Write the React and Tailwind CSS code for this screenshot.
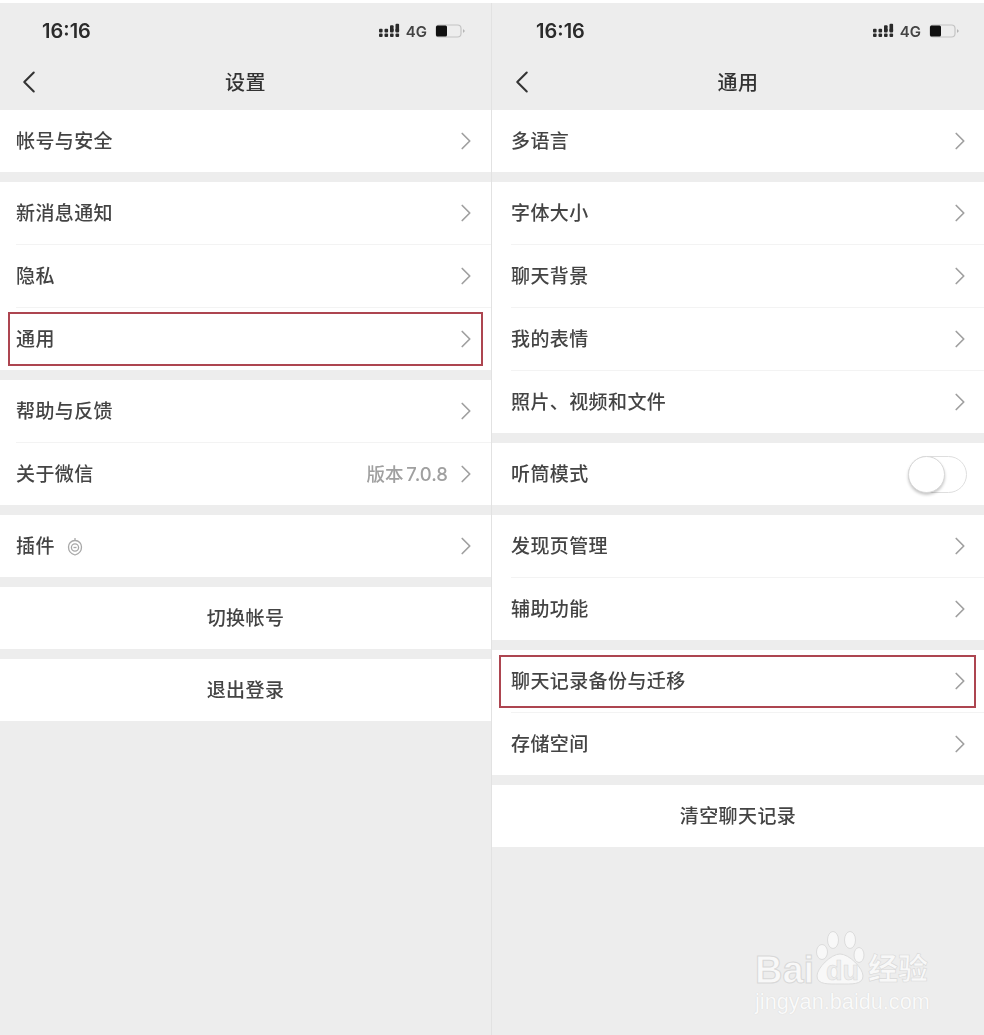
import { ChevronRight, ChevronLeft } from 'lucide-react';

function StatusIcons() {
  return (
    <div className="flex items-center gap-[5px] blur-[0.4px]">
      <svg width="22" height="16" viewBox="0 0 22 16" className="text-[#2a2a2a]">
        {[0, 1, 2, 3].map(col => (
          <g key={col} fill="currentColor">
            <rect x={col * 5.5} y="10.5" width="3.6" height="3.6" rx="1" />
            <rect x={col * 5.5} y="5.8" width="3.6" height="3.6" rx="1" />
            {col > 1 && <rect x={col * 5.5} y={col > 2 ? 0.8 : 2.2} width="3.6" height={col > 2 ? 8 : 6} rx="1" />}
          </g>
        ))}
      </svg>
      <span className="text-[15px] font-semibold text-[#444] leading-none">4G</span>
      <svg width="31" height="14" viewBox="0 0 31 14" className="ml-[3px]">
        <rect x="1" y="1" width="25" height="12" rx="3.5" fill="none" stroke="#c4c4c4" strokeWidth="1.2" />
        <rect x="1" y="1.5" width="11" height="11" rx="1.5" fill="#111" />
        <path d="M28 5 L30 7 L28 9 Z" fill="#b5b5b5" />
      </svg>
    </div>
  );
}

function Row({ label, value, icon, toggle, center, divider, boxed, wide }) {
  const pad = center ? 'justify-center' : wide ? 'justify-between pl-[19px] pr-[9px]' : 'justify-between pl-4 pr-[10px]';
  return (
    <div className="relative">
      {divider && <div className={`h-px bg-[#f3f3f3] ${wide ? 'ml-[19px]' : 'ml-4'}`} />}
      <div className={`h-[62px] flex items-center text-[19px] font-medium tracking-[0.4px] text-[#444] ${pad}`}>
        <div className="flex items-center gap-3 pt-[2px] blur-[0.6px]">
          <span>{label}</span>
          {icon && (
            <svg width="16" height="20" viewBox="0 0 16 20" fill="none" stroke="#a8a8a8" strokeWidth="1.3">
              <path d="M8 1 L8 4" />
              <path d="M8 3.5 C12 3.5 14.5 6.5 14.5 10 C14.5 14 11.5 17 8 18 C4.5 17 1.5 14 1.5 10 C1.5 6.5 4 3.5 8 3.5 Z" />
              <circle cx="8" cy="10.5" r="3.6" />
              <path d="M6.5 10.5 L9.5 10.5" />
            </svg>
          )}
        </div>
        {!center && !toggle && (
          <div className="flex items-center gap-[3px]">
            {value && <span className="text-[18.5px] text-[#a0a0a0] tracking-normal [word-spacing:-2px] pt-[2px] blur-[0.6px]">{value}</span>}
            <ChevronRight size={30} strokeWidth={1.4} className="text-[#a0a0a0] blur-[0.3px]" />
          </div>
        )}
        {toggle && (
          <div className="relative w-[59px] h-[37px] mr-[8px] rounded-full border border-[#dedede] bg-white blur-[0.5px]">
            <div className="absolute -left-px -top-px w-[37px] h-[37px] rounded-full bg-white border border-[#d8d8d8] shadow-[0_2px_3px_rgba(0,0,0,0.22)]" />
          </div>
        )}
      </div>
      {boxed && (
        <div className={`absolute top-[5px] bottom-[4px] border-2 border-[#ad4550] blur-[0.4px] ${wide ? 'left-[7px] right-2' : 'left-2 right-2'}`} />
      )}
    </div>
  );
}

function Group({ rows, wide }) {
  return (
    <div className="bg-white mb-[10px]">
      {rows.map((r, i) => <Row key={r.label} {...r} wide={wide} divider={i > 0} />)}
    </div>
  );
}

function Phone({ title, groups, wide }) {
  return (
    <div className={`bg-[#ededed] ${wide ? 'flex-1 min-w-0' : 'w-[491px] shrink-0'}`}>
      <div className={`h-[55px] flex items-center justify-between pt-[1px] ${wide ? 'pl-[44px] pr-[24px]' : 'pl-[42px] pr-[25px]'}`}>
        <span className="text-[20px] font-semibold text-[#2b2b2b] leading-none blur-[0.4px]">16:16</span>
        <StatusIcons />
      </div>
      <div className="relative h-[52px] flex items-center justify-center">
        <ChevronLeft size={38} strokeWidth={1.3} className={`absolute top-[5px] text-[#333] blur-[0.3px] ${wide ? 'left-[11px]' : 'left-[10px]'}`} />
        <span className="text-[20px] font-medium text-[#333] tracking-[0.4px] pb-[2px] blur-[0.6px]">{title}</span>
      </div>
      {groups.map((rows, i) => <Group key={i} rows={rows} wide={wide} />)}
    </div>
  );
}

const LEFT = [
  [{ label: '帐号与安全' }],
  [{ label: '新消息通知' }, { label: '隐私' }, { label: '通用', boxed: true }],
  [{ label: '帮助与反馈' }, { label: '关于微信', value: '版本 7.0.8' }],
  [{ label: '插件', icon: true }],
  [{ label: '切换帐号', center: true }],
  [{ label: '退出登录', center: true }],
];

const RIGHT = [
  [{ label: '多语言' }],
  [{ label: '字体大小' }, { label: '聊天背景' }, { label: '我的表情' }, { label: '照片、视频和文件' }],
  [{ label: '听筒模式', toggle: true }],
  [{ label: '发现页管理' }, { label: '辅助功能' }],
  [{ label: '聊天记录备份与迁移', boxed: true }, { label: '存储空间' }],
  [{ label: '清空聊天记录', center: true }],
];

function Watermark() {
  return (
    <div className="absolute left-[755px] top-[930px] w-[176px] h-[84px] font-['Liberation_Sans','Noto_Sans_CJK_SC',sans-serif]">
      <svg width="60" height="56" viewBox="0 0 60 56" className="absolute left-[58px] top-0" fill="#f8f8f8" stroke="#dcdcdc" strokeWidth="1">
        <ellipse cx="9" cy="22" rx="5.5" ry="7.5" />
        <ellipse cx="20" cy="10" rx="5.5" ry="8.5" />
        <ellipse cx="37" cy="10" rx="5.5" ry="8.5" />
        <ellipse cx="46" cy="25" rx="5" ry="7.5" />
        <path d="M27 24 C36 24 50 38 50 46 C50 55 38 54 27 54 C16 54 4 55 4 46 C4 38 18 24 27 24 Z" />
      </svg>
      <span className="absolute left-0 top-[18px] text-[38px] font-bold leading-[44px] text-[#f8f8f8] [-webkit-text-stroke:1px_#d8d8d8]">Bai</span>
      <span className="absolute left-[71px] top-[26px] text-[27px] font-bold leading-[30px] text-[#ededed] [-webkit-text-stroke:0.5px_#d8d8d8]">du</span>
      <span className="absolute left-[113px] top-[21px] text-[30px] font-bold leading-[36px] text-[#f8f8f8] [-webkit-text-stroke:0.6px_#d8d8d8]">经验</span>
      <span className="absolute left-0 top-[60px] text-[21.7px] leading-[24px] text-[#fafafa] [text-shadow:0_0_1px_#cfcfcf] whitespace-nowrap">jingyan.baidu.com</span>
    </div>
  );
}

export default function App() {
  return (
    <div className="relative w-[984px] h-[1035px] overflow-hidden bg-white pt-[3px] font-['Inter','Noto_Sans_CJK_SC',sans-serif]">
      <div className="flex h-full">
        <Phone title="设置" groups={LEFT} />
        <div className="w-px shrink-0 bg-[#e2e2e2]" />
        <Phone title="通用" groups={RIGHT} wide />
      </div>
      <Watermark />
    </div>
  );
}
